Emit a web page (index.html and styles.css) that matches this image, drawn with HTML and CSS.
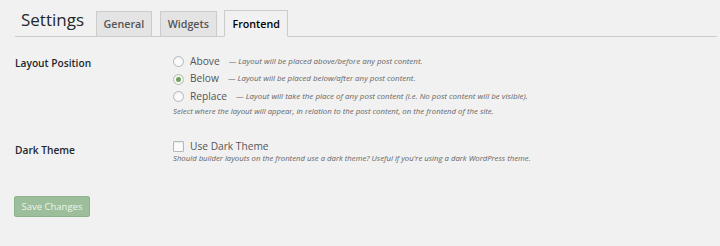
FILE: index.html
```html
<!DOCTYPE html>
<html>
<head>
<meta charset="utf-8">
<link rel="stylesheet" href="styles.css">
</head>
<body>
<div class="wrap">
  <div class="tabs-bar">
    <h1 class="title">Settings</h1>
    <a class="tab">General</a>
    <a class="tab">Widgets</a>
    <a class="tab active">Frontend</a>
  </div>

  <div class="form">
    <div class="row row-layout">
      <div class="th">Layout Position</div>
      <div class="td">
        <div class="opt">
          <span class="radio"></span>
          <span class="opt-label">Above</span>
          <span class="opt-desc">— Layout will be placed above/before any post content.</span>
        </div>
        <div class="opt">
          <span class="radio checked"></span>
          <span class="opt-label">Below</span>
          <span class="opt-desc">— Layout will be placed below/after any post content.</span>
        </div>
        <div class="opt">
          <span class="radio"></span>
          <span class="opt-label">Replace</span>
          <span class="opt-desc">— Layout will take the place of any post content (i.e. No post content will be visible).</span>
        </div>
        <p class="desc">Select where the layout will appear, in relation to the post content, on the frontend of the site.</p>
      </div>
    </div>

    <div class="row row-dark">
      <div class="th">Dark Theme</div>
      <div class="td">
        <div class="opt opt-check">
          <span class="checkbox"></span>
          <span class="opt-label">Use Dark Theme</span>
        </div>
        <p class="desc desc-check">Should builder layouts on the frontend use a dark theme? Useful if you're using a dark WordPress theme.</p>
      </div>
    </div>
  </div>

  <div class="submit">
    <button class="button">Save Changes</button>
  </div>
</div>
</body>
</html>
```

FILE: styles.css
```css
html, body {
  margin: 0;
  padding: 0;
  background: #f1f1f1;
}
body {
  font-family: "Open Sans", "Noto Sans", sans-serif;
  color: #444;
  width: 720px;
  height: 246px;
  overflow: hidden;
}
.wrap {
  padding: 0 3px 0 15px;
}
.tabs-bar {
  display: flex;
  align-items: flex-end;
  border-bottom: 1px solid #cccccc;
  height: 37px;
  box-sizing: border-box;
}
.title {
  margin: 0 4px 0 0;
  padding: 0 0 4px 6px;
  font-size: 17px;
  line-height: 24px;
  font-weight: 400;
  color: #23282d;
}
.tab {
  margin: 0 0 -1px 7.5px;
  padding: 4px 7px;
  font-size: 10.7px;
  line-height: 16px;
  font-weight: 600;
  color: #555;
  background: #e4e4e4;
  border: 1px solid #cccccc;
}
.tab.active {
  background: #f1f1f1;
  color: #000;
  border-bottom-color: #f1f1f1;
  padding-top: 5px;
}
.form {
  margin-top: 15px;
  display: flex;
  flex-direction: column;
  gap: 22.5px;
}
.row {
  display: grid;
  grid-template-columns: 158px 1fr;
}
.th {
  padding-top: 3.5px;
  font-size: 10.2px;
  line-height: 14px;
  font-weight: 600;
  color: #23282d;
}
.row-dark .th {
  padding-top: 4px;
}
.opt {
  display: flex;
  align-items: center;
  height: 17.5px;
}
.opt-check {
  height: 14px;
}
.radio {
  box-sizing: border-box;
  width: 11px;
  height: 11px;
  border-radius: 50%;
  border: 1px solid #b4b9be;
  background: #fbfbfb;
  box-shadow: inset 0 1px 2px rgba(0,0,0,0.07);
  margin-top: 2px;
  display: flex;
  align-items: center;
  justify-content: center;
}
.radio.checked {
  border-color: #a6c29c;
}
.radio.checked::after {
  content: "";
  width: 5px;
  height: 5px;
  border-radius: 50%;
  background: #6fa05d;
}
.checkbox {
  box-sizing: border-box;
  width: 11px;
  height: 11px;
  border: 1px solid #b4b9be;
  background: #fbfbfb;
  border-radius: 1px;
  box-shadow: inset 0 1px 2px rgba(0,0,0,0.07);
  margin-top: 1px;
}
.opt-label {
  margin-left: 6px;
  font-size: 10.2px;
  color: #555;
}
.opt-desc {
  margin-left: 9px;
  font-size: 7.95px;
  font-style: italic;
  color: #666;
}
.desc {
  margin: 0;
  font-size: 7.8px;
  line-height: 12px;
  font-style: italic;
  color: #666;
}
.desc-check {
  font-size: 7.75px;
  line-height: 10px;
}
.submit {
  margin-top: 29.5px;
}
.button {
  font-family: "Open Sans", "Noto Sans", sans-serif;
  font-size: 9.5px;
  line-height: 19px;
  height: 21px;
  padding: 0 6.5px;
  margin-left: -1px;
  color: #eef4ec;
  background: #9cbe9a;
  border: 1px solid #8fb28d;
  border-radius: 2px;
}
```
